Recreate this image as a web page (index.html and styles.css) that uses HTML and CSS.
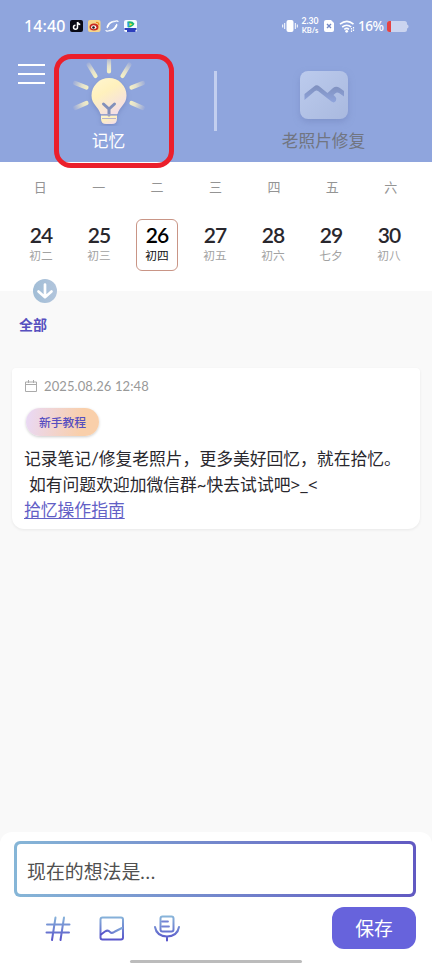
FILE: index.html
```
<!DOCTYPE html>
<html lang="zh-CN">
<head>
<meta charset="utf-8">
<meta name="viewport" content="width=device-width, initial-scale=1">
<title>拾忆</title>
<link rel="stylesheet" href="styles.css">
</head>
<body>
<div class="app">
  <header class="header">
    <div class="status">
      <span class="clock">14:40</span>
      <svg class="apps" width="68" height="14" viewBox="0 0 68 14">
        <rect x="0" y="1" width="13" height="12" rx="2" fill="#080914"/>
        <path d="M7.500 3v5.200a2 2 0 1 1-2-2M7.500 3q.5 2.300 2.800 2.400" fill="none" stroke="#fff" stroke-width="1.500"/>
        <rect x="18" y="1" width="12.500" height="12" rx="2" fill="#f6d58b"/>
        <ellipse cx="24" cy="8" rx="4.500" ry="3.500" fill="#c72a20"/>
        <ellipse cx="23.700" cy="8.300" rx="2.600" ry="2" fill="#fff"/>
        <circle cx="23.500" cy="8.500" r="1.300" fill="#191111"/>
        <path d="M26 3.500q3-.5 2.800 2.600" fill="none" stroke="#ed8a22" stroke-width="1.200"/>
        <path d="M36.500 8C37.500 3.500 42 1 46 1.800c-4 .4-7.500 3-8 6.700-.2 1.400-1.200 1-1.500-.5zM47.500 6C46.500 10.500 42 13 38 12.200c4-.4 7.500-3 8-6.700.2-1.400 1.200-1 1.500.5z" fill="#fff"/>
        <path d="M38 7.500q1.500-4.500 7-5M46 6.500q-1.500 4.500-7 5M45 2.200q2.500-.8 3 .3M39 11.800q-2.500.8-3-.3" fill="none" stroke="#fff" stroke-width="1.200" stroke-linecap="round"/>
        <rect x="54" y="1" width="13" height="12" rx="2" fill="#f5faff"/>
        <path d="M57.500 2.500q5-1 7 2.200-1.500 3.300-6.500 3.800z" fill="#1bb774"/><path d="M57.500 2.500v6l2.800-2.700z" fill="#269be8"/><path d="M59.500 4l3 1.300-3 1.700z" fill="#ffe33d"/>
        <path d="M54.500 10h12M57 12h8.500" stroke="#2d3fbd" stroke-width="1.800"/>
      </svg>
      <div class="status-right">
        <svg width="16" height="14" viewBox="0 0 16 14"><rect x="4.500" y="1" width="7" height="12" rx="2" fill="#fff"/><path d="M2.700 4v6M.7 5.500v3M13.300 4v6M15.300 5.500v3" stroke="#fff"/></svg>
        <span class="speed"><b>2.30</b><b>KB/s</b></span>
        <svg class="sim" width="10" height="12" viewBox="0 0 10 12"><path d="M2 0h5l3 3v7a2 2 0 0 1-2 2H2a2 2 0 0 1-2-2V2a2 2 0 0 1 2-2z" fill="#fff"/><path d="M3 4l4 4M7 4L3 8" stroke="#7188c5" stroke-width="1.400"/></svg>
        <svg class="wifi" width="16" height="13" viewBox="0 0 16 13"><path d="M1 4.200q7-5.500 13.500 0M3.200 7q4.600-3.600 9 0M5.300 9.300q2.400-1.800 4.700 0" fill="none" stroke="#fff" stroke-width="1.600"/><circle cx="7.700" cy="11.300" r="1.400" fill="#fff"/><path d="M12.500 8v4M14.500 7v4" stroke="#fff" stroke-width="1.200" stroke-dasharray="1.500 1"/></svg>
        <span class="percent">16%</span>
        <svg width="22" height="11" viewBox="0 0 22 11"><rect width="20" height="11" rx="2.500" fill="#cbd4ef"/><path d="M2.500 0H4v11H2.500A2.500 2.500 0 0 1 0 8.500v-6A2.500 2.500 0 0 1 2.500 0z" fill="#e44242"/><path d="M20 3.500q1.500 0 1.500 2t-1.500 2z" fill="#cbd4ef"/></svg>
      </div>
    </div>
    <div class="tabs">
      <button class="menu" aria-label="菜单"><i></i><i></i><i></i></button>
      <div class="tab memory">
        <svg class="bulb" width="76" height="68" viewBox="0 0 76 68">
          <defs>
            <linearGradient id="glow" x1="0" y1="0" x2=".6" y2="1"><stop offset="0" stop-color="#fff6d2"/><stop offset=".45" stop-color="#fff1bd"/><stop offset="1" stop-color="#f4dfe4"/></linearGradient>
            <radialGradient id="rays" gradientUnits="userSpaceOnUse" cx="38" cy="36" r="39"><stop offset=".5" stop-color="#fbf6c3"/><stop offset=".72" stop-color="#e3e1cc"/><stop offset="1" stop-color="#91a4dc"/></radialGradient>
          </defs>
          <g stroke="url(#rays)" stroke-width="4.200" stroke-linecap="round"><path d="M38 13.500l.01-11M24.500 18l-7-11.500M51.500 18l7-11.500M15.500 29.500L4 25M60.500 29.500L72 25M15.500 45L4 50M60.500 45l11.500 5"/></g>
          <g class="bulb-shape" fill="url(#glow)"><path d="M38 20a17.500 17.500 0 0 1 17.500 17.500c0 9-7 11-9 18.500H29.500c-2-7.500-9-9.500-9-18.500A17.500 17.500 0 0 1 38 20z"/><path d="M30 57.500h16v3q0 5.500-5 5.500h-6q-5 0-5-5.500z"/></g>
          <path d="M32.500 46l5.500 5 5.500-5M38 51v6" fill="none" stroke="#8290bb" stroke-width="3" stroke-linecap="round"/>
          <path d="M30 57h16M31 60.500h14" stroke="#b9b4cc"/>
        </svg>
        <span>记忆</span>
      </div>
      <i class="divider"></i>
      <div class="tab repair">
        <svg class="photo" width="48" height="48" viewBox="0 0 48 48">
          <defs><linearGradient id="photoBg" x1="0" y1="0" x2="1" y2="1"><stop stop-color="#bccbed"/><stop offset="1" stop-color="#a9b9df"/></linearGradient><linearGradient id="ridge" x1="0" y1="0" x2="0" y2="1"><stop stop-color="#7f90be"/><stop offset="1" stop-color="#8fa4dc"/></linearGradient></defs>
          <rect width="48" height="48" rx="8" fill="url(#photoBg)"/>
          <path d="M4.500 23l9.500-7.500q2.500-2.300 5.500 0l8 6.500 5.500-5q3-2.500 6.500-.3l4.500 3.300v5.500l-5-3.500q-2-1-3.500.2l-2 1.800 2 2q1.500 1.700.3 4-1.800 2.500-4.300.6L18 20q-1.500-1-3 0L4.500 29z" fill="url(#ridge)"/>
        </svg>
        <span>老照片修复</span>
      </div>
    </div>
    <div class="highlight"></div>
  </header>

  <section class="calendar">
    <div class="week"><span>日</span><span>一</span><span>二</span><span>三</span><span>四</span><span>五</span><span>六</span></div>
    <div class="days">
      <div class="day"><b>24</b><span>初二</span></div>
      <div class="day"><b>25</b><span>初三</span></div>
      <div class="day selected"><b>26</b><span>初四</span></div>
      <div class="day"><b>27</b><span>初五</span></div>
      <div class="day"><b>28</b><span>初六</span></div>
      <div class="day"><b>29</b><span>七夕</span></div>
      <div class="day"><b>30</b><span>初八</span></div>
    </div>
    <svg class="expand" width="24" height="24" viewBox="0 0 24 24"><defs><linearGradient id="down"><stop stop-color="#a1bdd6"/><stop offset="1" stop-color="#b2c5dc"/></linearGradient></defs><circle cx="12" cy="12" r="12" fill="url(#down)"/><path d="M12 5.500V18M5.500 12.500L12 18.200l6.500-5.700" fill="none" stroke="#fff" stroke-width="2.700" stroke-linecap="round" stroke-linejoin="round"/></svg>
  </section>

  <main class="main">
    <h2 class="filter">全部</h2>
    <article class="card">
      <div class="date"><svg width="12" height="12" viewBox="0 0 12 12"><path d="M.5 2h11v9.500H.5zM.5 4.500h11M3.500 0v3M8.500 0v3" fill="none" stroke="#aaa"/></svg><time>2025.08.26 12:48</time></div>
      <span class="tag">新手教程</span>
      <p class="note">记录笔记/修复老照片，更多美好回忆，就在拾忆。<br><span class="second">如有问题欢迎加微信群~快去试试吧<span class="face">&gt;_&lt;</span></span><br><a>拾忆操作指南</a></p>
    </article>
  </main>

  <footer class="composer">
    <div class="input"><span>现在的想法是<i>...</i></span></div>
    <div class="actions">
      <svg class="tools" width="136" height="28" viewBox="0 0 136 28">
        <defs><linearGradient id="tool" gradientUnits="userSpaceOnUse" x1="0" y1="1" x2="0" y2="27"><stop stop-color="#88b6da"/><stop offset="1" stop-color="#544cc9"/></linearGradient><linearGradient id="scene" x1="0" y1="0" x2="1" y2="0"><stop stop-color="#544cc9"/><stop offset="1" stop-color="#82a9d8"/></linearGradient></defs>
        <g fill="none" stroke="url(#tool)" stroke-width="2" stroke-linecap="round" stroke-linejoin="round">
          <path d="M10.500 2.500L7 25M19 2.500L15.500 25M2 9.500l22.500-.01M1.500 17.500l22.500-.01"/>
          <rect x="55.500" y="2.500" width="22.500" height="22" rx="2"/>
          <path d="M56 19.500l4-3q3-2 5 .5 2 2 5-.5l7-3.500" stroke="url(#scene)"/>
          <rect x="115.500" y="1.500" width="13" height="15" rx="2"/>
          <path d="M110 12q1.500 9 12 9.500 10.500-.5 12-9.500M122 21.500v4"/>
          <path d="M117 6.500h6M117 11.500h7" stroke="#7382d3" stroke-width="1.800"/>
        </g>
      </svg>
      <button class="save">保存</button>
    </div>
    <i class="home"></i>
  </footer>
</div>
</body>
</html>
```
FILE: styles.css
```
* { box-sizing: border-box; }
body { margin: 0; background: #f9f9f9; color: #29272d; font-family: Lato, "Noto Sans CJK SC", sans-serif; }
svg { display: block; flex: none; }
button { border: 0; padding: 0; font: inherit; }
.app { width: 432px; height: 964px; display: flex; flex-direction: column; overflow: hidden; }
.header { position: relative; height: 162px; background: #8fa5dd; flex: none; }
.status { height: 51px; padding: 1px 23px 0 24px; display: flex; align-items: center; color: #fff; }
.clock { width: 46px; font: 500 16px/20px "Noto Sans", sans-serif; letter-spacing: .1px; white-space: nowrap; }
.status-right { margin-left: auto; display: flex; align-items: center; }
.speed { width: 20px; margin-left: 2px; display: flex; flex-direction: column; align-items: center; font: 7.500px/9px Lato, sans-serif; }
.speed b { height: 9px; font-weight: 700; line-height: 9px; white-space: nowrap; }
.speed b:first-child { font-size: 8.500px; }
.sim { margin-left: 4px; }
.wifi { margin-left: 5px; }
.percent { width: 27px; margin: 0 2px 0 3px; font: 500 13.500px/16px "Noto Sans", sans-serif; letter-spacing: -.5px; }
.tabs { display: flex; height: 111px; }
.menu { width: 27px; height: 20px; margin: 13px 0 0 18px; background: none; display: flex; flex-direction: column; justify-content: space-between; }
.menu i { height: 2px; background: #fff; }
.tab { display: flex; flex-direction: column; align-items: center; font-size: 16.700px; line-height: 24px; white-space: nowrap; }
.memory { width: 127px; color: #fff; }
.bulb { margin-top: 7px; }
.bulb-shape { filter: drop-shadow(0 2px 2px #6577b280); }
.memory span { margin-top: 3px; }
.divider { width: 3px; height: 60px; margin: 20px 0 0 42px; background: #c3cfef; }
.repair { width: 213px; color: #717581; }
.photo { margin-top: 20px; filter: drop-shadow(0 3px 3px #7386be88); }
.repair span { margin-top: 10px; }
.highlight { position: absolute; left: 54px; top: 54px; width: 120px; height: 114px; border: 5px solid #eb1f2b; border-radius: 17px; z-index: 2; }
.calendar { position: relative; height: 129px; flex: none; background: #fff; }
.week { display: flex; padding: 13px 12px 0 11px; color: #949494; font-size: 13px; line-height: 24px; text-align: center; }
.week span { flex: 1; }
.days { display: flex; padding: 20px 14px 0 12px; }
.day { width: 58px; display: flex; flex-direction: column; align-items: center; }
.day b { height: 23px; margin-top: 4px; font-size: 21px; font-weight: 600; line-height: 23px; letter-spacing: -1px; }
.day span { margin-top: 1px; font-size: 11.700px; line-height: 16px; color: #a2a2a2; }
.day.selected { width: 42px; height: 52px; margin: 0 8px; border: 1px solid #c99586; border-radius: 6px; color: #000; }
.selected b { margin-top: 3px; }
.day.selected span { color: #111; }
.expand { position: absolute; left: 33px; bottom: -12px; }
.main { flex: 1; padding: 22px 12px 0; }
.filter { margin: 0 0 0 7px; font-size: 14px; line-height: 24px; color: #5750bf; }
.card { height: 161px; margin-top: 31px; padding: 8px 12px; background: #fff; border-radius: 4px 4px 12px 12px; box-shadow: 0 1px 3px #00000012; }
.date { display: flex; align-items: center; gap: 7px; height: 20px; padding-left: 1px; font: 13px/20px Lato, sans-serif; color: #999; }
.date time { letter-spacing: .1px; }
.tag { display: block; width: 73px; height: 28px; margin: 12px 0 0 2px; border-radius: 14px; background: linear-gradient(100deg, #e9d9f7, #f9cfaa 75%); box-shadow: 0 1px 3px #0003; color: #574fc0; font-size: 11.800px; font-weight: 500; line-height: 29px; text-align: center; }
.note { margin: 10px 0 0; font-size: 16.800px; line-height: 25.500px; white-space: nowrap; }
.second { margin-left: 5px; }
.face { font-family: "Noto Sans", sans-serif; letter-spacing: .3px; }
.note a { color: #6260c6; text-decoration: underline; text-decoration-thickness: 1px; text-underline-offset: 2px; }
.composer { height: 132px; padding: 9px 16px 0 14px; background: #fff; border-radius: 12px 12px 0 0; flex: none; }
.input { height: 56px; padding: 3px; border-radius: 6px; background: linear-gradient(90deg, #86b6d7, #6159c2); }
.input span { display: block; height: 50px; padding: 4px 0 0 10px; border-radius: 4px; background: #fff; color: #505050; font-size: 18.900px; line-height: 48px; }
.input i { font-style: normal; letter-spacing: .7px; }
.actions { display: flex; justify-content: space-between; margin-top: 10px; padding-left: 31px; }
.tools { margin-top: 8px; }
.save { width: 84px; height: 42px; border-radius: 12px; background: #6763dc; color: #fff; font-size: 18.800px; line-height: 44px; }
.home { display: block; width: 172px; height: 3px; margin: 11px 0 0 116px; border-radius: 2px; background: #bcbcbc; }
```
